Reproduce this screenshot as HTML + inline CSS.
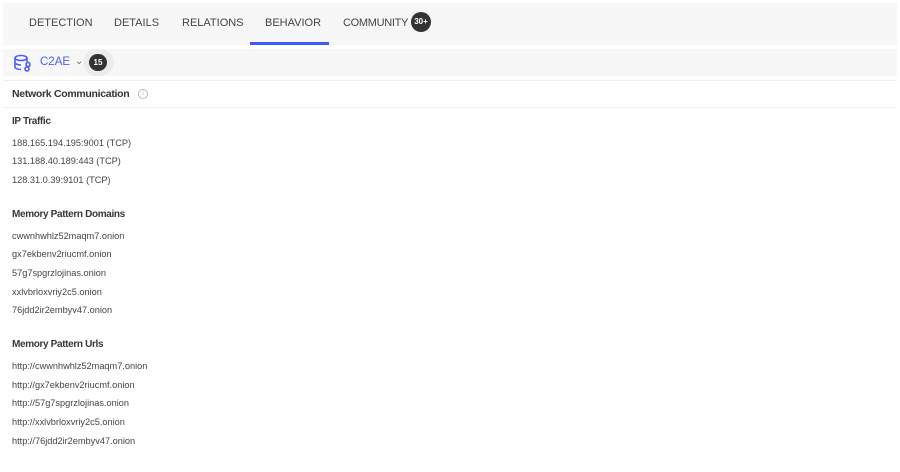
<!DOCTYPE html>
<html><head><style>
body{margin:0;width:900px;height:472px;background:#fff;font-family:"Liberation Sans",sans-serif;color:#3a3a3a;position:relative;overflow:hidden}
.a{position:absolute;white-space:nowrap}
.tab{font-size:11px;color:#444;top:17px}
.h{font-size:10px;font-weight:bold;color:#383838;left:12px;letter-spacing:-0.35px}
.i{font-size:9.2px;color:#444;left:12px}
</style></head><body>
<div class="a" style="left:3px;top:3px;width:894px;height:42px;background:#f7f7f8"></div>
<div class="a tab" style="left:29px">DETECTION</div>
<div class="a tab" style="left:114px">DETAILS</div>
<div class="a tab" style="left:182px">RELATIONS</div>
<div class="a tab" style="left:265px">BEHAVIOR</div>
<div class="a tab" style="left:343px;letter-spacing:-0.3px">COMMUNITY</div>
<div class="a" style="left:411px;top:12px;width:20px;height:20px;border-radius:10px;background:#333;color:#fff;font-size:8px;font-weight:bold;text-align:center;line-height:20px">30+</div>
<div class="a" style="left:250px;top:42px;width:79px;height:3px;background:#3d5afe"></div>
<div class="a" style="left:3px;top:49px;width:894px;height:27px;background:#f7f7f8"></div>
<svg class="a" style="left:13px;top:53px" width="20" height="20" viewBox="0 0 20 20" fill="none" stroke="#4f5cf5" stroke-width="1.6"><ellipse cx="8" cy="5" rx="6" ry="2.5"/><path d="M2 5v9c0 1.5 3 2.5 6 2.5M14 5v4M2 9.5c0 1.4 3 2.5 6 2.5"/><circle cx="15" cy="11.5" r="2"/><circle cx="14" cy="16" r="2"/></svg>
<div class="a" style="left:40px;top:56px;font-size:11.5px;color:#4f5cf5">C2AE</div>
<div class="a" style="left:75px;top:56px;font-size:10px;color:#666">⌄</div>
<div class="a" style="left:83px;top:49px;width:31px;height:27px;border-radius:14px;background:#ececec"></div>
<div class="a" style="left:89px;top:54px;width:18px;height:17px;border-radius:9px;background:#333;color:#fff;font-size:8px;font-weight:bold;text-align:center;line-height:17px">15</div>
<div class="a" style="left:3px;top:80px;width:894px;height:1px;background:#eee"></div>
<div class="a" style="left:12px;top:88px;font-size:10.5px;font-weight:bold;color:#333;letter-spacing:-0.3px">Network Communication</div>
<div class="a" style="left:138px;top:89px;width:8px;height:8px;border:1px solid #bbb;border-radius:50%;font-size:6px;color:#aaa;text-align:center;line-height:8px">i</div>
<div class="a" style="left:3px;top:107px;width:894px;height:1px;background:#eee"></div>
<div class="a h" style="top:116px">IP Traffic</div>
<div class="a i" style="top:138px">188.165.194.195:9001 (TCP)</div>
<div class="a i" style="top:156px">131.188.40.189:443 (TCP)</div>
<div class="a i" style="top:175px">128.31.0.39:9101 (TCP)</div>
<div class="a h" style="top:209px">Memory Pattern Domains</div>
<div class="a i" style="top:231px">cwwnhwhlz52maqm7.onion</div>
<div class="a i" style="top:249px">gx7ekbenv2riucmf.onion</div>
<div class="a i" style="top:268px">57g7spgrzlojinas.onion</div>
<div class="a i" style="top:287px">xxlvbrloxvriy2c5.onion</div>
<div class="a i" style="top:305px">76jdd2ir2embyv47.onion</div>
<div class="a h" style="top:339px">Memory Pattern Urls</div>
<div class="a i" style="top:361px">http://cwwnhwhlz52maqm7.onion</div>
<div class="a i" style="top:380px">http://gx7ekbenv2riucmf.onion</div>
<div class="a i" style="top:398px">http://57g7spgrzlojinas.onion</div>
<div class="a i" style="top:417px">http://xxlvbrloxvriy2c5.onion</div>
<div class="a i" style="top:436px">http://76jdd2ir2embyv47.onion</div>
</body></html>
